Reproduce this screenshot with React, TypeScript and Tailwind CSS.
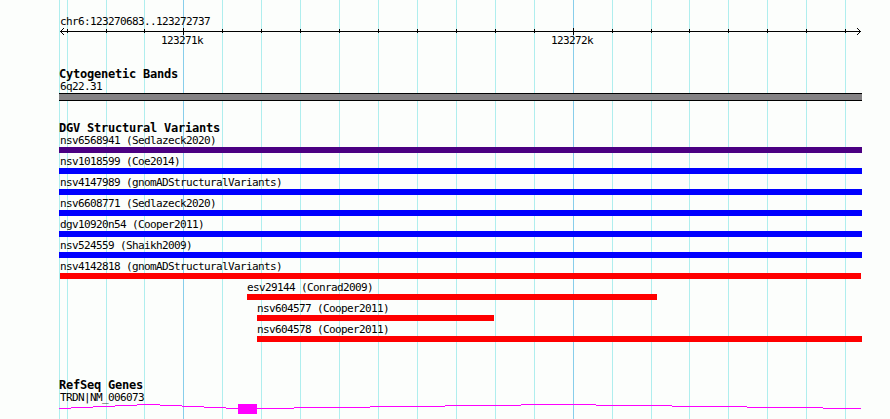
import { clsx } from "clsx"

type Variant = {
  id: string
  study: string
  start: number
  end: number
  color: string
}

const MINOR_LINES = [59, 67, 106, 144, 222, 261, 300, 339, 378, 417, 456, 495, 534, 612, 651, 689, 728, 767, 806, 845]
const MAJOR_LINES = [183, 573]

const variants: Variant[] = [
  { id: "nsv6568941", study: "Sedlazeck2020", start: 59, end: 862, color: "bg-[#4b0082]" },
  { id: "nsv1018599", study: "Coe2014", start: 59, end: 862, color: "bg-[#0000ff]" },
  { id: "nsv4147989", study: "gnomADStructuralVariants", start: 59, end: 862, color: "bg-[#0000ff]" },
  { id: "nsv6608771", study: "Sedlazeck2020", start: 59, end: 862, color: "bg-[#0000ff]" },
  { id: "dgv10920n54", study: "Cooper2011", start: 59, end: 862, color: "bg-[#0000ff]" },
  { id: "nsv524559", study: "Shaikh2009", start: 59, end: 862, color: "bg-[#0000ff]" },
  { id: "nsv4142818", study: "gnomADStructuralVariants", start: 60, end: 861, color: "bg-[#ff0000]" },
  { id: "esv29144", study: "Conrad2009", start: 247, end: 657, color: "bg-[#ff0000]" },
  { id: "nsv604577", study: "Cooper2011", start: 257, end: 494, color: "bg-[#ff0000]" },
  { id: "nsv604578", study: "Cooper2011", start: 257, end: 862, color: "bg-[#ff0000]" },
]

// [start, end, y] of each intron step, y counted from the top of the gene track
const intronSteps = [
  [59, 71, 4],
  [71, 93, 3],
  [93, 115, 2],
  [115, 137, 1],
  [137, 160, 0],
  [160, 182, 1],
  [182, 204, 2],
  [204, 226, 3],
  [226, 238, 4],
  [257, 294, 4],
  [294, 370, 3],
  [370, 445, 2],
  [445, 521, 1],
  [521, 596, 0],
  [596, 672, 1],
  [672, 747, 2],
  [747, 823, 3],
  [823, 861, 4],
]

function GridLines() {
  return (
    <svg className="absolute inset-0" width="890" height="419" shapeRendering="crispEdges">
      {MINOR_LINES.map((x) => (
        <rect key={x} x={x} width="1" height="419" fill="#afeeee" />
      ))}
      {MAJOR_LINES.map((x) => (
        <rect key={x} x={x} width="1" height="419" fill="#87ceeb" />
      ))}
    </svg>
  )
}

function Label({ children, className }: { children: React.ReactNode; className?: string }) {
  return (
    <div className={clsx("h-3 whitespace-pre text-[11px] leading-[14px] tracking-[-0.622px]", className)}>
      {children}
    </div>
  )
}

function TrackTitle({ children }: { children: string }) {
  return (
    <h2 className="h-3 pl-[59px] whitespace-pre text-[12px] leading-[13px] font-bold tracking-[-0.224px]">
      {children}
    </h2>
  )
}

function Ruler() {
  return (
    <section className="pt-[15px]">
      <Label className="pl-[60px]">chr6:123270683..123272737</Label>
      <svg className="block" width="890" height="8" shapeRendering="crispEdges">
        <rect x="60" y="4" width="801" height="1" />
        {MINOR_LINES.slice(1).map((x) => (
          <rect key={x} x={x} y="2" width="1" height="4" />
        ))}
        {MAJOR_LINES.map((x) => (
          <rect key={x} x={x} y="1" width="1" height="7" />
        ))}
        {[1, 2, 3].map((d) => (
          <g key={d}>
            <rect x={60 + d} y={4 - d} width="1" height="1" />
            <rect x={60 + d} y={4 + d} width="1" height="1" />
            <rect x={860 - d} y={4 - d} width="1" height="1" />
            <rect x={860 - d} y={4 + d} width="1" height="1" />
          </g>
        ))}
      </svg>
      <div className="-mt-px flex pb-px pl-[161px]">
        <Label className="w-[390px]">123271k</Label>
        <Label>123272k</Label>
      </div>
    </section>
  )
}

function VariantRow({ variant }: { variant: Variant }) {
  const { id, study, start, end, color } = variant
  return (
    <div className="h-[21px]" style={{ marginLeft: start }}>
      <Label className={start === 59 ? "pl-px" : ""}>
        {id} ({study})
      </Label>
      <div className={clsx("mt-px h-1.5", color)} style={{ width: end - start }} />
    </div>
  )
}

export default function App() {
  return (
    <main className="relative h-[419px] w-[890px] overflow-hidden bg-[#fcfefc] font-['DejaVu_Sans_Mono',monospace] text-black">
      <GridLines />
      <div className="relative">
        <Ruler />

        <section className="pt-[21px]">
          <TrackTitle>Cytogenetic Bands</TrackTitle>
          <Label className="pl-[60px]">6q22.31</Label>
          <div className="mt-px ml-[59px] h-2 w-[803px] border-y border-black bg-[#848284]" />
        </section>

        <section className="pt-[21px]">
          <TrackTitle>DGV Structural Variants</TrackTitle>
          {variants.map((variant) => (
            <VariantRow key={variant.id} variant={variant} />
          ))}
        </section>

        <section className="pt-[35px]">
          <TrackTitle>RefSeq Genes</TrackTitle>
          <Label className="pl-[60px]">TRDN|NM_006073</Label>
          <svg className="mt-px block" width="890" height="11" shapeRendering="crispEdges" fill="#ff00ff">
            {intronSteps.map(([start, end, y]) => (
              <rect key={start} x={start} y={y} width={end - start} height="1" />
            ))}
            <rect x="238" y="0" width="19" height="10" />
          </svg>
        </section>
      </div>
    </main>
  )
}
